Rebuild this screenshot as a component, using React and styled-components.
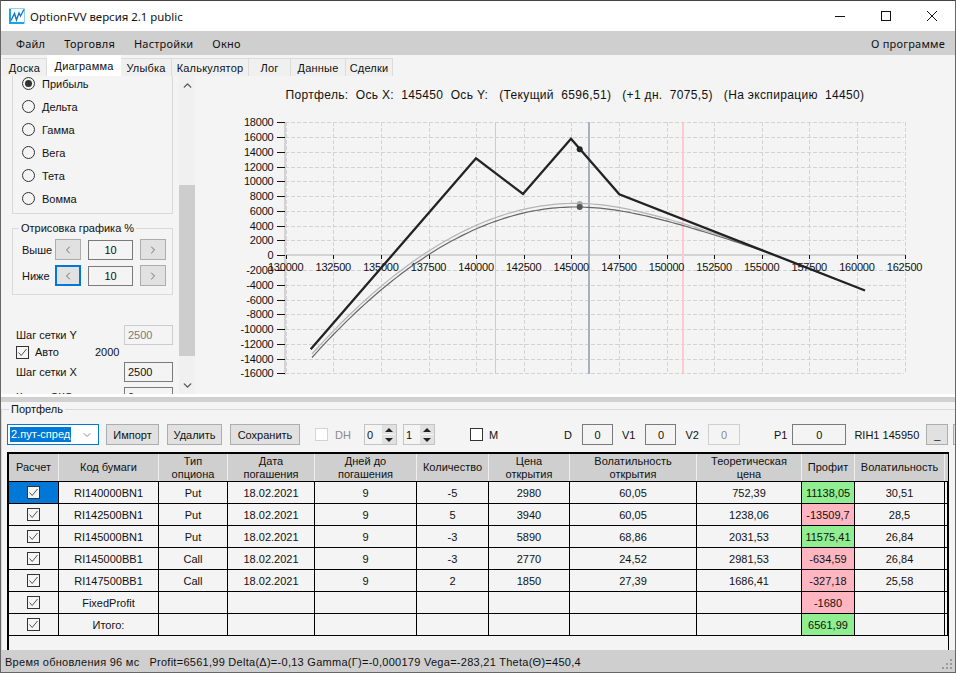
import React from "react";
import styled, { createGlobalStyle } from "styled-components";
import { ChevronUp, ChevronDown, ChevronLeft, ChevronRight } from "lucide-react";

const GlobalStyle = createGlobalStyle`
  html, body { margin: 0; padding: 0; background: #f4f4f4; }
  * { box-sizing: border-box; }
`;

const SEGOE = `"Noto Sans", "Open Sans", sans-serif`;
const ARIAL = `"Liberation Sans", Arial, sans-serif`;

const Win = styled.div`
  width: 956px;
  height: 673px;
  display: flex;
  flex-direction: column;
  border: 1px solid #666;
  border-top-color: #444;
  background: #f4f4f4;
  overflow: hidden;
  font-family: ${ARIAL};
  font-size: 11px;
  color: #111;
`;

const TitleBar = styled.div`
  height: 30px;
  flex-shrink: 0;
  display: flex;
  align-items: center;
  background: #fff;
  padding-left: 8px;
`;
const AppName = styled.span`
  font-family: ${SEGOE};
  font-size: 11.4px;
  margin-left: 5px;
`;
const WinButtons = styled.div`
  margin-left: auto;
  display: flex;
`;
const WinButton = styled.div`
  width: 46px;
  height: 30px;
  display: flex;
  align-items: center;
  justify-content: center;
`;

const MenuBar = styled.div`
  height: 24px;
  flex-shrink: 0;
  display: flex;
  align-items: center;
  background: #cfcfcf;
  font-family: ${SEGOE};
  font-size: 11px;
  letter-spacing: 0.2px;
  padding: 0 10px 0 15px;
`;
const MenuItem = styled.span`
  margin-right: ${(p) => p.$mr || 0}px;
  margin-left: ${(p) => (p.$right ? "auto" : 0)};
`;

const TabRow = styled.div`
  height: 21px;
  flex-shrink: 0;
  display: flex;
  align-items: flex-end;
  padding-left: 2px;
  background: #f4f4f4;
  font-size: 11px;
  letter-spacing: 0.2px;
`;
const Tab = styled.div`
  width: ${(p) => p.$w}px;
  height: ${(p) => (p.$active ? 21 : 18)}px;
  display: flex;
  align-items: center;
  justify-content: center;
  background: ${(p) => (p.$active ? "#fff" : "#f0f0f0")};
  border: 1px solid #dcdcdc;
  border-width: ${(p) => (p.$active ? 0 : "1px 1px 0 0")};
`;

const TopSplit = styled.div`
  height: 318px;
  flex-shrink: 0;
  display: flex;
  overflow: hidden;
`;
const LeftPane = styled.div`
  width: 178px;
  flex-shrink: 0;
  overflow: hidden;
  padding-left: 11px;
  display: flex;
  flex-direction: column;
`;
const RadioBox = styled.div`
  width: 161px;
  height: 142px;
  flex-shrink: 0;
  border: 1px solid #d9d9d9;
  border-top: none;
  padding: 0 0 0 9px;
  margin-top: -4px;
`;
const RadioRow = styled.div`
  height: 23px;
  display: flex;
  align-items: center;
  gap: 7px;
`;
const RadioMark = styled.span`
  width: 13px;
  height: 13px;
  border-radius: 50%;
  border: 1px solid #333;
  background: #f4f4f4;
  display: flex;
  align-items: center;
  justify-content: center;
  &::after {
    content: "";
    display: ${(p) => (p.$on ? "block" : "none")};
    width: 7px;
    height: 7px;
    border-radius: 50%;
    background: #333;
  }
`;
const GroupBox = styled.fieldset`
  margin: 0;
  min-width: 0;
  border: 1px solid #d9d9d9;
  padding: 0;
`;
const Legend = styled.legend`
  padding: 0 2px;
  margin-left: ${(p) => p.$ml}px;
  height: 14px;
  line-height: 14px;
`;
const DrawBox = styled(GroupBox)`
  width: 161px;
  height: 74px;
  flex-shrink: 0;
  margin-top: 7px;
  padding: 4px 0 0 9px;
  display: flex;
  flex-direction: column;
  gap: 5px;
`;
const StepRow = styled.div`
  display: flex;
  align-items: center;
  height: 21px;
`;
const StepLabel = styled.span`
  width: 33px;
`;
const StepButton = styled.div`
  width: 26px;
  height: 21px;
  background: #e1e1e1;
  color: #222;
  border: ${(p) => (p.$focus ? "2px solid #0078d7" : "1px solid #adadad")};
  display: flex;
  align-items: center;
  justify-content: center;
`;
const StepField = styled.div`
  width: 45px;
  height: 20px;
  margin: 0 7px;
  border: 1px solid #7a7a7a;
  display: flex;
  align-items: center;
  justify-content: center;
`;
const Settings = styled.div`
  margin: 30px 0 0 4px;
  width: 157px;
  display: flex;
  flex-direction: column;
  flex-shrink: 0;
`;
const SettingRow = styled.div`
  display: flex;
  align-items: center;
  justify-content: space-between;
  height: 20px;
  flex-shrink: 0;
  margin-top: ${(p) => p.$mt || 0}px;
`;
const SmallInput = styled.div`
  width: 49px;
  height: 20px;
  padding-left: 3px;
  display: flex;
  align-items: center;
  border: 1px solid ${(p) => (p.$disabled ? "#cccccc" : "#7a7a7a")};
  color: ${(p) => (p.$disabled ? "#7a7a7a" : "#111")};
`;
const AutoRow = styled.div`
  display: flex;
  align-items: center;
  height: 17px;
  padding-bottom: 3px;
`;
const AutoValue = styled.span`
  margin-left: 36px;
`;
const BoxMark = styled.span`
  width: 13px;
  height: 13px;
  flex-shrink: 0;
  border: 1px solid ${(p) => (p.$off ? "#d4d4d4" : "#333")};
  background: ${(p) => (p.$white ? "#fff" : "#f6f6f6")};
  display: inline-flex;
  align-items: center;
  justify-content: center;
`;
const AutoText = styled.span`
  margin-left: 6px;
`;

const ScrollBar = styled.div`
  width: 16px;
  flex-shrink: 0;
  background: #f0f0f0;
  display: flex;
  flex-direction: column;
  align-items: center;
  color: #555;
`;
const ScrollEnd = styled.div`
  height: 18px;
  display: flex;
  align-items: center;
  justify-content: center;
`;
const ScrollThumb = styled.div`
  width: 16px;
  height: 171px;
  margin-top: 91px;
  background: #cdcdcd;
`;
const ScrollGap = styled.div`
  flex: 1;
`;

const ChartPane = styled.div`
  flex: 1;
  min-width: 0;
  display: flex;
  flex-direction: column;
  padding-right: 3px;
`;
const ChartTitle = styled.div`
  height: 36px;
  flex-shrink: 0;
  display: flex;
  align-items: center;
  justify-content: center;
  padding: 1px 0 0 3px;
  font-size: 12px;
  letter-spacing: 0.33px;
  white-space: pre;
`;
const ChartSvg = styled.svg`
  display: block;
  width: 756px;
  height: 282px;
  font-family: ${ARIAL};
  font-size: 11px;
  fill: #111;
`;

const SplitWhite = styled.div`
  height: 3px;
  flex-shrink: 0;
  background: #fff;
`;
const SplitGray = styled.div`
  height: 5px;
  flex-shrink: 0;
  background: #d0d0d0;
`;

const PortfolioBox = styled(GroupBox)`
  flex: 1;
  min-height: 0;
  border-bottom: none;
  border-right: none;
  padding: 8px 0 0 5px;
  display: flex;
  flex-direction: column;
  overflow: hidden;
`;
const Toolbar = styled.div`
  height: 21px;
  flex-shrink: 0;
  display: flex;
  align-items: center;
  white-space: nowrap;
`;
const ComboBox = styled.div`
  width: 92px;
  height: 21px;
  flex-shrink: 0;
  border: 1px solid #0078d7;
  background: #fff;
  padding: 0 5px 0 2px;
  display: flex;
  align-items: center;
  justify-content: space-between;
`;
const Selected = styled.span`
  background: #0078d7;
  color: #fff;
  padding: 1px 1px;
  font-size: 11px;
  line-height: 13px;
`;
const ToolButton = styled.div`
  width: ${(p) => p.$w}px;
  height: 21px;
  margin-left: ${(p) => p.$ml}px;
  flex-shrink: 0;
  background: #e1e1e1;
  border: 1px solid #adadad;
  display: flex;
  align-items: center;
  justify-content: center;
`;
const ToolText = styled.span`
  margin-left: ${(p) => p.$ml}px;
  flex-shrink: 0;
  color: ${(p) => (p.$muted ? "#8a8a8a" : "#111")};
`;
const ToolMark = styled.span`
  margin-left: ${(p) => p.$ml}px;
  display: inline-flex;
  flex-shrink: 0;
`;
const ToolField = styled.div`
  width: ${(p) => p.$w}px;
  height: 21px;
  margin-left: ${(p) => p.$ml}px;
  flex-shrink: 0;
  display: flex;
  align-items: center;
  justify-content: center;
  border: 1px solid ${(p) => (p.$disabled ? "#cfcfcf" : "#7a7a7a")};
  color: ${(p) => (p.$disabled ? "#8a8a8a" : "#111")};
`;
const Spinner = styled.div`
  width: ${(p) => p.$w}px;
  height: 21px;
  margin-left: ${(p) => p.$ml}px;
  flex-shrink: 0;
  border: 1px solid #c4c4c4;
  padding-left: 2px;
  display: flex;
  align-items: center;
  justify-content: space-between;
`;
const SpinArrows = styled.div`
  width: 14px;
  height: 19px;
  display: flex;
  flex-direction: column;
  gap: 1px;
`;
const SpinArrow = styled.div`
  flex: 1;
  background: #e1e1e1;
  display: flex;
  align-items: center;
  justify-content: center;
  &::after {
    content: "";
    border-left: 4px solid transparent;
    border-right: 4px solid transparent;
    ${(p) => (p.$down ? "border-top" : "border-bottom")}: 4px solid #222;
  }
`;

const TableWrap = styled.div`
  width: 942px;
  flex: 1;
  margin: 7px 0 0 0;
  border: 1px solid #000;
  border-width: 2px 1px 0 2px;
  overflow: hidden;
`;
const Columns = "50px 100px 69px 87px 102px 72px 81px 127px 105px 53px 90px 3px";
const HeaderRow = styled.div`
  display: grid;
  grid-template-columns: ${Columns};
  height: 28px;
  background: #cfcfcf;
  border-bottom: 1px solid #000;
`;
const HeaderCell = styled.div`
  display: flex;
  align-items: center;
  justify-content: center;
  text-align: center;
  line-height: 13px;
  border-right: 1px solid #efefef;
  padding: 0 2px;
`;
const DataRow = styled.div`
  display: grid;
  grid-template-columns: ${Columns};
  height: 22px;
  border-bottom: 1px solid #000;
`;
const Cell = styled.div`
  display: flex;
  align-items: center;
  justify-content: center;
  border-right: 1px solid #000;
  white-space: nowrap;
  background: ${(p) =>
    p.$tone === "up"
      ? "#90ee90"
      : p.$tone === "down"
        ? "#ffb6c1"
        : p.$tone === "sel"
          ? "#0078d7"
          : "transparent"};
`;

const StatusBar = styled.div`
  height: 22px;
  flex-shrink: 0;
  background: #cfcfcf;
  display: flex;
  align-items: center;
  padding: 1px 0 0 4px;
  letter-spacing: 0.27px;
  white-space: pre;
  position: relative;
`;
const Grip = styled.svg`
  position: absolute;
  right: 2px;
  bottom: 2px;
`;

const CheckTick = ({ color = "#555" }) => (
  <svg width="11" height="11" viewBox="0 0 11 11">
    <path d="M1.5 5.5 L4.2 8.5 L9.5 2" fill="none" stroke={color} strokeWidth="1" />
  </svg>
);

const Logo = () => (
  <svg width="16" height="16" viewBox="0 0 16 16">
    <path d="M.5 15.5V.5h15v15z" fill="none" stroke="#8fd3f4" strokeWidth="1" />
    <path d="M1 1v14h14" fill="none" stroke="#1aa3e8" strokeWidth="2" />
    <path d="M2 12.5L5.5 5.5l2 6.5L10 5l1.5 3L15 1.5" fill="none" stroke="#1478c8" strokeWidth="1.4" />
  </svg>
);

const WinIcon = ({ kind }) => (
  <svg width="12" height="12" viewBox="0 0 12 12" fill="none" stroke="#111" strokeWidth="1">
    {kind === "min" && <path d="M1 6.5h10" />}
    {kind === "max" && <rect x="1.5" y="1.5" width="9" height="9" />}
    {kind === "close" && <path d="M1 1l10 10M11 1L1 11" />}
  </svg>
);

// pixel helpers for the chart, in window coordinates
const xOf = (i) => 285.7 + i * 47.6;
const yOf = (v) => 255.2 - v * 0.0073882;
const xTicks = Array.from({ length: 14 }, (_, i) => i);
const yTicks = Array.from({ length: 18 }, (_, i) => 18000 - i * 2000);

const blackLine = "310.7,349.3 476,158.3 523,194 571,138.7 619.3,194.3 865,290.5";
const blackTailY = (x) => 194.3 + ((x - 619.3) * 96.2) / 245.7;

// today's curve: peak near x=575, cubic on the left, hyperbola on the right,
// then it runs under the expiry line
const darkY = (x) => {
  const d = x - 575;
  if (d < 0) return 207 + 0.002287 * d * d + 0.00000042 * d * d * d;
  if (x > 760) return blackTailY(x);
  return 207 + 0.38 * (Math.sqrt(d * d + 95 * 95) - 95);
};
// the +1 day curve runs just above it and joins it past 760
const lightY = (x) => {
  if (x < 600) return darkY(x) - 3.6;
  if (x < 683) return darkY(x) - (3.6 - ((x - 600) / 83) * 1.6);
  if (x < 760) return darkY(x) - (2 - ((x - 683) / 77) * 1.5);
  return darkY(x);
};
const curvePath = (fn) => {
  const pts = [];
  for (let x = 312; x <= 836; x += 4) pts.push(`${x},${fn(x).toFixed(1)}`);
  return pts.join(" ");
};

const Chart = () => (
  <ChartSvg viewBox="195 112 756 282">
    {xTicks.map((i) => (
      <line key={i} x1={Math.round(xOf(i)) + 0.5} x2={Math.round(xOf(i)) + 0.5} y1="122" y2="374" stroke="#d3d3d3" strokeDasharray="4 2" />
    ))}
    {yTicks.map((v) => (
      <line key={v} x1="285" x2="904" y1={Math.round(yOf(v)) + 0.5} y2={Math.round(yOf(v)) + 0.5} stroke="#d3d3d3" strokeDasharray="4 2" />
    ))}
    <line x1="285" x2="285" y1="122" y2="375" stroke="#d3d3d3" strokeWidth="2" />
    <line x1="285" x2="905" y1="255" y2="255" stroke="#d3d3d3" strokeWidth="2" />
    <line x1="495.5" x2="495.5" y1="122" y2="374" stroke="#f5b8c4" />
    <line x1="683" x2="683" y1="122" y2="374" stroke="#ffc8d2" strokeWidth="2" />
    <line x1="589" x2="589" y1="122" y2="374" stroke="#a9afbd" strokeWidth="2" />
    {yTicks.map((v) => (
      <g key={v}>
        <line x1="277" x2="285" y1={Math.round(yOf(v)) + 0.5} y2={Math.round(yOf(v)) + 0.5} stroke="#111" />
        <text x="273.5" y={yOf(v) + 4} textAnchor="end" letterSpacing="-0.2">{v}</text>
      </g>
    ))}
    {xTicks.map((i) => (
      <g key={i}>
        <line x1={Math.round(xOf(i)) + 0.5} x2={Math.round(xOf(i)) + 0.5} y1="255" y2="259" stroke="#111" />
        <text x={xOf(i)} y="271" textAnchor="middle" letterSpacing="-0.2">{130000 + i * 2500}</text>
      </g>
    ))}
    <polyline points={curvePath(lightY)} fill="none" stroke="#b4b4b4" strokeWidth="1.2" />
    <polyline points={curvePath(darkY)} fill="none" stroke="#666" strokeWidth="1.2" />
    <polyline points={blackLine} fill="none" stroke="#222" strokeWidth="2.3" />
    <circle cx="579.7" cy="149.3" r="3" fill="#222" />
    <circle cx="579.7" cy="204" r="3" fill="#aaa" />
    <circle cx="579.7" cy="207" r="3" fill="#555" />
  </ChartSvg>
);

const tabs = [
  ["Доска", 44], ["Диаграмма", 74, true], ["Улыбка", 51], ["Калькулятор", 77],
  ["Лог", 42], ["Данные", 55], ["Сделки", 47],
];
const radios = ["Прибыль", "Дельта", "Гамма", "Вега", "Тета", "Вомма"];
const headers = [
  "Расчет", "Код бумаги", "Тип опциона", "Дата погашения", "Дней до погашения", "Количество",
  "Цена открытия", "Волатильность открытия", "Теоретическая цена", "Профит", "Волатильность", "",
];
const rows = [
  ["RI140000BN1", "Put", "18.02.2021", "9", "-5", "2980", "60,05", "752,39", "11138,05", "30,51", "up"],
  ["RI142500BN1", "Put", "18.02.2021", "9", "5", "3940", "60,05", "1238,06", "-13509,7", "28,5", "down"],
  ["RI145000BN1", "Put", "18.02.2021", "9", "-3", "5890", "68,86", "2031,53", "11575,41", "26,84", "up"],
  ["RI145000BB1", "Call", "18.02.2021", "9", "-3", "2770", "24,52", "2981,53", "-634,59", "26,84", "down"],
  ["RI147500BB1", "Call", "18.02.2021", "9", "2", "1850", "27,39", "1686,41", "-327,18", "25,58", "down"],
  ["FixedProfit", "", "", "", "", "", "", "", "-1680", "", "down"],
  ["Итого:", "", "", "", "", "", "", "", "6561,99", "", "up"],
];

const App = () => (
  <>
    <GlobalStyle />
    <Win>
      <TitleBar>
        <Logo />
        <AppName>OptionFVV версия 2.1 public</AppName>
        <WinButtons>
          <WinButton><WinIcon kind="min" /></WinButton>
          <WinButton><WinIcon kind="max" /></WinButton>
          <WinButton><WinIcon kind="close" /></WinButton>
        </WinButtons>
      </TitleBar>
      <MenuBar>
        <MenuItem $mr={19}>Файл</MenuItem>
        <MenuItem $mr={19}>Торговля</MenuItem>
        <MenuItem $mr={19}>Настройки</MenuItem>
        <MenuItem>Окно</MenuItem>
        <MenuItem $right>О программе</MenuItem>
      </MenuBar>
      <TabRow>
        {tabs.map(([name, w, active]) => (
          <Tab key={name} $w={w} $active={active}>{name}</Tab>
        ))}
      </TabRow>
      <TopSplit>
        <LeftPane>
          <RadioBox>
            {radios.map((r, i) => (
              <RadioRow key={r}>
                <RadioMark $on={i === 0} />
                {r}
              </RadioRow>
            ))}
          </RadioBox>
          <DrawBox>
            <Legend $ml={-3}>Отрисовка графика %</Legend>
            <StepRow>
              <StepLabel>Выше</StepLabel>
              <StepButton><ChevronLeft size={12} strokeWidth={1.2} /></StepButton>
              <StepField>10</StepField>
              <StepButton><ChevronRight size={12} strokeWidth={1.2} /></StepButton>
            </StepRow>
            <StepRow>
              <StepLabel>Ниже</StepLabel>
              <StepButton $focus><ChevronLeft size={12} strokeWidth={1.2} /></StepButton>
              <StepField>10</StepField>
              <StepButton><ChevronRight size={12} strokeWidth={1.2} /></StepButton>
            </StepRow>
          </DrawBox>
          <Settings>
            <SettingRow>
              Шаг сетки Y
              <SmallInput $disabled>2500</SmallInput>
            </SettingRow>
            <AutoRow>
              <BoxMark><CheckTick /></BoxMark>
              <AutoText>Авто</AutoText>
              <AutoValue>2000</AutoValue>
            </AutoRow>
            <SettingRow>
              Шаг сетки X
              <SmallInput>2500</SmallInput>
            </SettingRow>
            <SettingRow $mt={5}>
              Канал СКО
              <SmallInput>0</SmallInput>
            </SettingRow>
          </Settings>
        </LeftPane>
        <ScrollBar>
          <ScrollEnd><ChevronUp size={13} strokeWidth={2.5} /></ScrollEnd>
          <ScrollThumb />
          <ScrollGap />
          <ScrollEnd><ChevronDown size={13} strokeWidth={2.5} /></ScrollEnd>
        </ScrollBar>
        <ChartPane>
          <ChartTitle>Портфель:  Ось X:  145450  Ось Y:   (Текущий  6596,51)   (+1 дн.  7075,5)   (На экспирацию  14450)</ChartTitle>
          <Chart />
        </ChartPane>
      </TopSplit>
      <SplitWhite />
      <SplitGray />
      <PortfolioBox>
        <Legend $ml={2}>Портфель</Legend>
        <Toolbar>
          <ComboBox>
            <Selected>2.пут-спред</Selected>
            <ChevronDown size={12} strokeWidth={1.2} color="#444" />
          </ComboBox>
          <ToolButton $w={53} $ml={7}>Импорт</ToolButton>
          <ToolButton $w={55} $ml={8}>Удалить</ToolButton>
          <ToolButton $w={70} $ml={8}>Сохранить</ToolButton>
          <ToolMark $ml={15}><BoxMark $off $white /></ToolMark>
          <ToolText $ml={7} $muted>DH</ToolText>
          <Spinner $w={33} $ml={13}>0<SpinArrows><SpinArrow /><SpinArrow $down /></SpinArrows></Spinner>
          <Spinner $w={32} $ml={6}>1<SpinArrows><SpinArrow /><SpinArrow $down /></SpinArrows></Spinner>
          <ToolMark $ml={35}><BoxMark $white /></ToolMark>
          <ToolText $ml={6}>M</ToolText>
          <ToolText $ml={66}>D</ToolText>
          <ToolField $w={31} $ml={10}>0</ToolField>
          <ToolText $ml={9}>V1</ToolText>
          <ToolField $w={31} $ml={10}>0</ToolField>
          <ToolText $ml={9}>V2</ToolText>
          <ToolField $w={32} $ml={9} $disabled>0</ToolField>
          <ToolText $ml={34}>P1</ToolText>
          <ToolField $w={54} $ml={5}>0</ToolField>
          <ToolText $ml={8}>RIH1 145950</ToolText>
          <ToolButton $w={22} $ml={7}>_</ToolButton>
          <ToolButton $w={22} $ml={5} />
        </Toolbar>
        <TableWrap>
          <HeaderRow>
            {headers.map((h, i) => (
              <HeaderCell key={i}>{h}</HeaderCell>
            ))}
          </HeaderRow>
          {rows.map((r, i) => (
            <DataRow key={r[0]}>
              <Cell $tone={i === 0 ? "sel" : undefined}>
                <BoxMark><CheckTick /></BoxMark>
              </Cell>
              {r.slice(0, 8).map((v, j) => (
                <Cell key={j}>{v}</Cell>
              ))}
              <Cell $tone={r[10]}>{r[8]}</Cell>
              <Cell>{r[9]}</Cell>
              <Cell />
            </DataRow>
          ))}
        </TableWrap>
      </PortfolioBox>
      <StatusBar>
        Время обновления 96 мс   Profit=6561,99 Delta(Δ)=-0,13 Gamma(Γ)=-0,000179 Vega=-283,21 Theta(Θ)=450,4
        <Grip width="12" height="12" viewBox="0 0 12 12" fill="#9a9a9a">
          <rect x="9" y="1" width="2" height="2" />
          <rect x="5" y="5" width="2" height="2" />
          <rect x="9" y="5" width="2" height="2" />
          <rect x="1" y="9" width="2" height="2" />
          <rect x="5" y="9" width="2" height="2" />
          <rect x="9" y="9" width="2" height="2" />
        </Grip>
      </StatusBar>
    </Win>
  </>
);

export default App;
